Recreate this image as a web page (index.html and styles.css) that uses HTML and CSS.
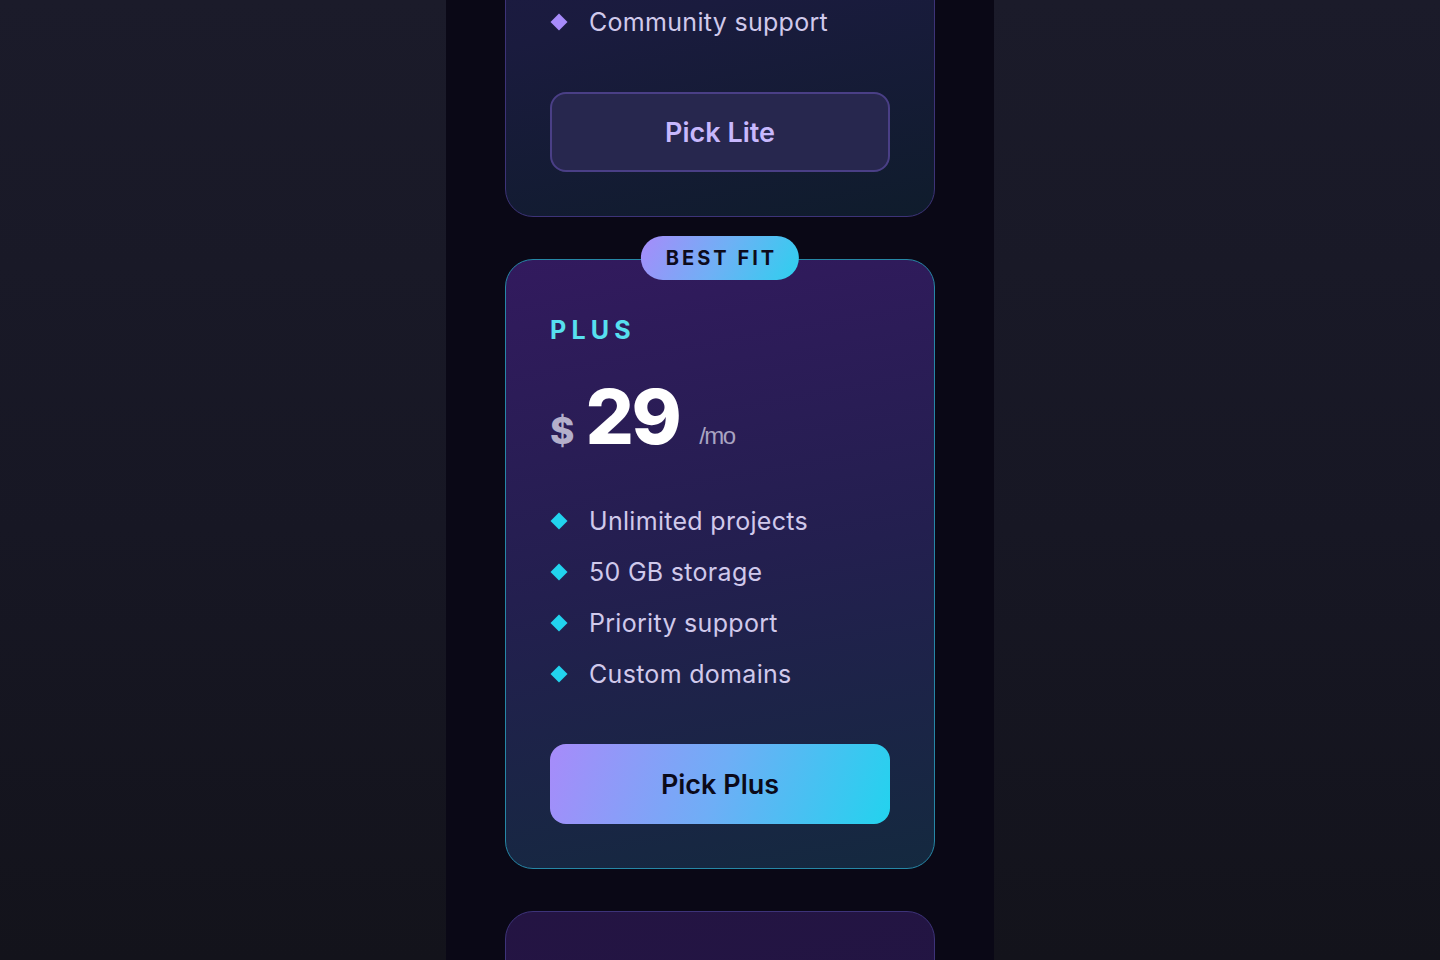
FILE: index.html
```html
<!DOCTYPE html>
<html>
  <head>
    <title>Pricing</title>
    <meta name="viewport" content="width=device-width, initial-scale=1.0">
    <link rel="stylesheet" href="styles.css">
  </head>
  <body>
    <main class="column">
      <div class="stack">

        <section class="card card-lite">
          <h2 class="tier tier-lite">LITE</h2>
          <div class="price">
            <span class="currency">$</span>
            <span class="amount">9</span>
            <span class="period">/mo</span>
          </div>
          <ul class="features features-lite">
            <li><span class="dot"></span>3 projects</li>
            <li><span class="dot"></span>5 GB storage</li>
            <li><span class="dot"></span>Community support</li>
          </ul>
          <button class="pick pick-lite">Pick Lite</button>
        </section>

        <section class="card card-plus">
          <span class="badge">BEST FIT</span>
          <h2 class="tier tier-plus">PLUS</h2>
          <div class="price">
            <span class="currency">$</span>
            <span class="amount">29</span>
            <span class="period">/mo</span>
          </div>
          <ul class="features features-plus">
            <li><span class="dot"></span>Unlimited projects</li>
            <li><span class="dot"></span>50 GB storage</li>
            <li><span class="dot"></span>Priority support</li>
            <li><span class="dot"></span>Custom domains</li>
          </ul>
          <button class="pick pick-plus">Pick Plus</button>
        </section>

        <section class="card card-pro">
          <h2 class="tier tier-lite">PRO</h2>
          <div class="price">
            <span class="currency">$</span>
            <span class="amount">79</span>
            <span class="period">/mo</span>
          </div>
          <ul class="features features-lite">
            <li><span class="dot"></span>Everything in Plus</li>
            <li><span class="dot"></span>500 GB storage</li>
            <li><span class="dot"></span>Dedicated manager</li>
            <li><span class="dot"></span>SSO &amp; audit logs</li>
          </ul>
          <button class="pick pick-lite">Pick Pro</button>
        </section>

      </div>
    </main>
  </body>
</html>
```

FILE: styles.css
```css
*{
  box-sizing: border-box;
}

html, body{
  margin: 0;
  height: 100%;
  overflow: hidden;
}

body{
  background: linear-gradient(180deg, #1b1b2a 0%, #171724 55%, #13131b 100%);
  font-family: Inter, "Noto Sans", sans-serif;
  color: #d0c9eb;
}

.column{
  width: 548px;
  min-height: 100%;
  margin: 0 auto;
  background-color: #0a0816;
}

/* page is scrolled: first card sits mostly above the fold */
.stack{
  display: flex;
  flex-direction: column;
  align-items: center;
  gap: 42px;
  margin-top: -342px;
  padding-bottom: 60px;
}

.card{
  position: relative;
  width: 430px;
  padding: 55px 44px 44px;
  border: 1.5px solid #3d3378;
  border-radius: 28px;
}

.card-lite{
  background: linear-gradient(168deg, #221a4c 0%, #1a1b3e 60%, #0f1c2c 100%);
}

.card-plus{
  border-color: #2687a6;
  background: linear-gradient(170deg, #321a5e 0%, #231f4f 50%, #14293f 100%);
}

.card-pro{
  background: linear-gradient(168deg, #241443 0%, #1c1842 100%);
  border-color: #3d3379;
}

.badge{
  position: absolute;
  top: -24px;
  left: 50%;
  transform: translateX(-50%);
  height: 44px;
  padding: 0 22px 0 25px;
  border-radius: 22px;
  background: linear-gradient(120deg, #a78bfa 0%, #6fb0f5 50%, #2dd0ee 100%);
  color: #0d0b1c;
  font-size: 20px;
  font-weight: 700;
  letter-spacing: 3px;
  line-height: 44px;
  white-space: nowrap;
}

.tier{
  margin: 0;
  font-size: 25px;
  line-height: 31px;
  font-weight: 700;
  letter-spacing: 5.2px;
}

.tier-plus{
  color: #57e0f0;
}

.tier-lite{
  color: #b69cfb;
}

.price{
  display: flex;
  align-items: baseline;
  margin-top: 32px;
  height: 76px;
  line-height: 76px;
}

.currency{
  font-size: 37px;
  font-weight: 800;
  color: #b4afcb;
  margin-right: 11px;
}

.amount{
  font-size: 76px;
  font-weight: 800;
  color: #ffffff;
  letter-spacing: -2.5px;
  margin-right: 20px;
}

.period{
  font-family: "Liberation Sans", Arial, sans-serif;
  font-size: 24px;
  color: #a9a4c2;
  letter-spacing: -1.5px;
}

.features{
  list-style: none;
  margin: 52px 0 0;
  padding: 0;
  display: flex;
  flex-direction: column;
  gap: 21px;
}

.features li{
  display: flex;
  align-items: center;
  gap: 24px;
  font-size: 25px;
  line-height: 30px;
  letter-spacing: 0.3px;
  color: #d0c9eb;
}

.dot{
  width: 12px;
  height: 12px;
  margin-left: 3px;
  transform: rotate(45deg);
  flex-shrink: 0;
}

.features-plus .dot{
  background-color: #22d3ee;
}

.features-lite .dot{
  background-color: #a78bfa;
}

.pick{
  display: block;
  width: 100%;
  height: 80px;
  margin-top: 55px;
  border-radius: 16px;
  font-family: Inter, sans-serif;
  font-size: 27px;
  font-weight: 600;
  cursor: pointer;
}

.pick-lite{
  background-color: #27274e;
  border: 2px solid #4a3f86;
  color: #c8b8fd;
}

.pick-plus{
  border: none;
  background: linear-gradient(110deg, #a78bfa 0%, #6eaef6 50%, #22d3ee 100%);
  color: #0b0a1a;
}
```
